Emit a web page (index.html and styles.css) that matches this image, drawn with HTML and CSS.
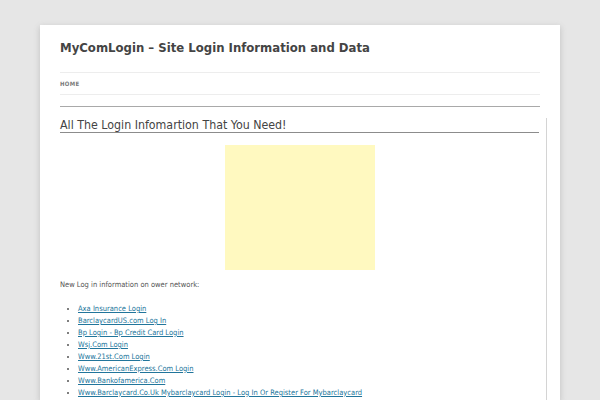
FILE: index.html
```html
<!DOCTYPE html>
<html>
<head>
<meta charset="utf-8">
<link rel="stylesheet" href="styles.css">
</head>
<body>
<div class="page">
  <header class="site-header">
    <h1 class="site-title">MyComLogin – Site Login Information and Data</h1>
    <nav class="main-nav"><a href="#">HOME</a></nav>
    <hr class="header-rule">
  </header>
  <main class="content">
    <h2 class="entry-title">All The Login Infomartion That You Need!</h2>
    <div class="entry">
      <div class="ad"></div>
      <p class="intro">New Log in information on ower network:</p>
      <ul class="links">
        <li><a href="#">Axa Insurance Login</a></li>
        <li><a href="#">BarclaycardUS.com Log In</a></li>
        <li><a href="#">Bp Login - Bp Credit Card Login</a></li>
        <li><a href="#">Wsj.Com Login</a></li>
        <li><a href="#">Www.21st.Com Login</a></li>
        <li><a href="#">Www.AmericanExpress.Com Login</a></li>
        <li><a href="#">Www.Bankofamerica.Com</a></li>
        <li><a href="#">Www.Barclaycard.Co.Uk Mybarclaycard Login - Log In Or Register For Mybarclaycard</a></li>
      </ul>
    </div>
  </main>
</div>
</body>
</html>
```
FILE: styles.css
```css
html, body { margin: 0; padding: 0; }
body {
  background: #e6e6e6;
  font-family: "DejaVu Sans Condensed", "DejaVu Sans", sans-serif;
  color: #444;
  overflow: hidden;
  height: 400px;
}
.page {
  margin: 25px 40px 0 40px;
  background: #fff;
  padding: 0 20px;
  height: 375px;
  box-shadow: 0 2px 6px rgba(100,100,100,0.3);
}
.site-header { padding-top: 14px; }
.site-title {
  margin: 0;
  font-size: 13px;
  line-height: 18px;
  font-weight: bold;
  color: #444;
}
.main-nav {
  margin-top: 15px;
  border-top: 1px solid #ededed;
  border-bottom: 1px solid #ededed;
  height: 21px;
  display: flex;
  align-items: center;
}
.main-nav a {
  font-size: 6px;
  font-weight: bold;
  color: #7a7a7a;
  text-decoration: none;
  letter-spacing: 0.3px;
}
.header-rule {
  margin: 11px 0 0 0;
  border: 0;
  border-top: 1px solid #a9a9a9;
  height: 0;
}
.content {
  margin-top: 11px;
  margin-right: -7px;
  border-right: 1px solid #d4d4d4;
  padding-right: 7px;
  height: 300px;
}
.entry-title {
  margin: 0;
  font-size: 12.3px;
  font-weight: normal;
  line-height: 14px;
  border-bottom: 1px solid #8c8c8c;
  color: #444;
}
.entry { padding-top: 12px; }
.ad {
  width: 150px;
  height: 125px;
  margin: 0 auto;
  background: #fff9c0;
}
.intro {
  margin: 9px 0 0 0;
  font-size: 7.5px;
  line-height: 12px;
  color: #555;
}
.links {
  margin: 12px 0 0 0;
  padding-left: 18px;
  font-size: 7.5px;
  line-height: 12px;
}
.links li::marker { color: #555; }
.links a { color: #21759b; }
```
